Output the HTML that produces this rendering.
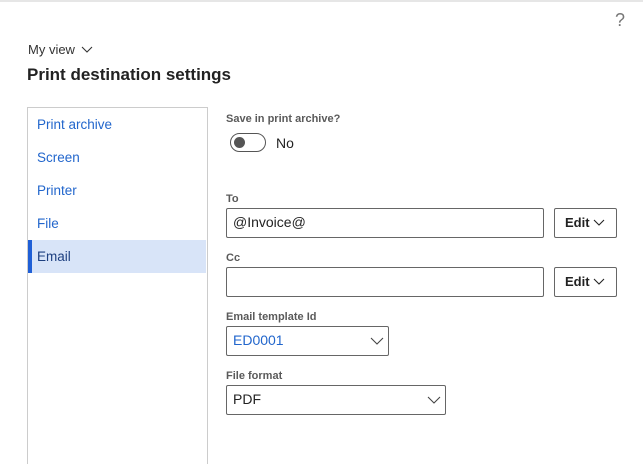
<!DOCTYPE html>
<html><head><style>
html,body{margin:0;width:643px;height:464px;overflow:hidden}
body{background:#fff;font-family:"Liberation Sans",sans-serif;position:relative;color:#222}
.a{position:absolute}
.lbl{font-size:11px;font-weight:bold;color:#5a5a5a;}
.inp{border:1px solid #666;border-radius:2px;box-sizing:border-box;background:#fff;font-size:14px;padding-left:6px;line-height:27px}
.nav{font-size:13.5px;color:#2266cc;left:37px}
.btn{border:1px solid #666;border-radius:2px;box-sizing:border-box;font-size:13px;font-weight:bold;line-height:27px;padding-left:10px}
</style></head><body>
<div class="a" style="left:0;top:0;width:643px;height:2px;background:#e6e6e6"></div>
<div class="a" style="left:615px;top:10px;font-size:18px;color:#777">?</div>
<div class="a" style="left:28px;top:42px;font-size:13px;color:#333">My view <svg width="12" height="8" style="margin-left:2px"><path d="M1 1l5 5 5-5" fill="none" stroke="#333" stroke-width="1.1"/></svg></div>
<div class="a" style="left:27px;top:65px;font-size:17px;font-weight:bold;color:#222">Print destination settings</div>
<div class="a" style="left:27px;top:107px;width:179px;height:360px;border:1px solid #ccc"></div>
<div class="a" style="left:28px;top:240px;width:178px;height:33px;background:#d8e4f8"></div>
<div class="a" style="left:28px;top:240px;width:4px;height:33px;background:#1f5fd6"></div>
<div class="a nav" style="top:117px">Print archive</div>
<div class="a nav" style="top:150px">Screen</div>
<div class="a nav" style="top:183px">Printer</div>
<div class="a nav" style="top:216px">File</div>
<div class="a nav" style="top:249px;color:#1d3f80">Email</div>
<div class="a lbl" style="left:226px;top:113px">Save in print archive?</div>
<div class="a" style="left:230px;top:133px;width:36px;height:19px;border:1px solid #555;border-radius:10px;box-sizing:border-box"></div>
<div class="a" style="left:234px;top:137px;width:11px;height:11px;border-radius:50%;background:#555"></div>
<div class="a" style="left:276px;top:135px;font-size:14px;color:#222">No</div>
<div class="a lbl" style="left:226px;top:193px">To</div>
<div class="a inp" style="left:226px;top:208px;width:318px;height:30px">@Invoice@</div>
<div class="a btn" style="left:554px;top:208px;width:63px;height:30px">Edit <svg width="12" height="8"><path d="M1 1l5 5 5-5" fill="none" stroke="#222" stroke-width="1.1"/></svg></div>
<div class="a lbl" style="left:226px;top:252px">Cc</div>
<div class="a inp" style="left:226px;top:267px;width:318px;height:30px"></div>
<div class="a btn" style="left:554px;top:267px;width:63px;height:30px">Edit <svg width="12" height="8"><path d="M1 1l5 5 5-5" fill="none" stroke="#222" stroke-width="1.1"/></svg></div>
<div class="a lbl" style="left:226px;top:311px">Email template Id</div>
<div class="a inp" style="left:226px;top:326px;width:163px;height:30px;color:#2266cc">ED0001</div>
<svg class="a" style="left:370px;top:337px" width="14" height="9"><path d="M1 1l6 6 6-6" fill="none" stroke="#444" stroke-width="1.1"/></svg>
<div class="a lbl" style="left:226px;top:370px">File format</div>
<div class="a inp" style="left:226px;top:385px;width:220px;height:30px">PDF</div>
<svg class="a" style="left:427px;top:396px" width="14" height="9"><path d="M1 1l6 6 6-6" fill="none" stroke="#444" stroke-width="1.1"/></svg>
</body></html>
